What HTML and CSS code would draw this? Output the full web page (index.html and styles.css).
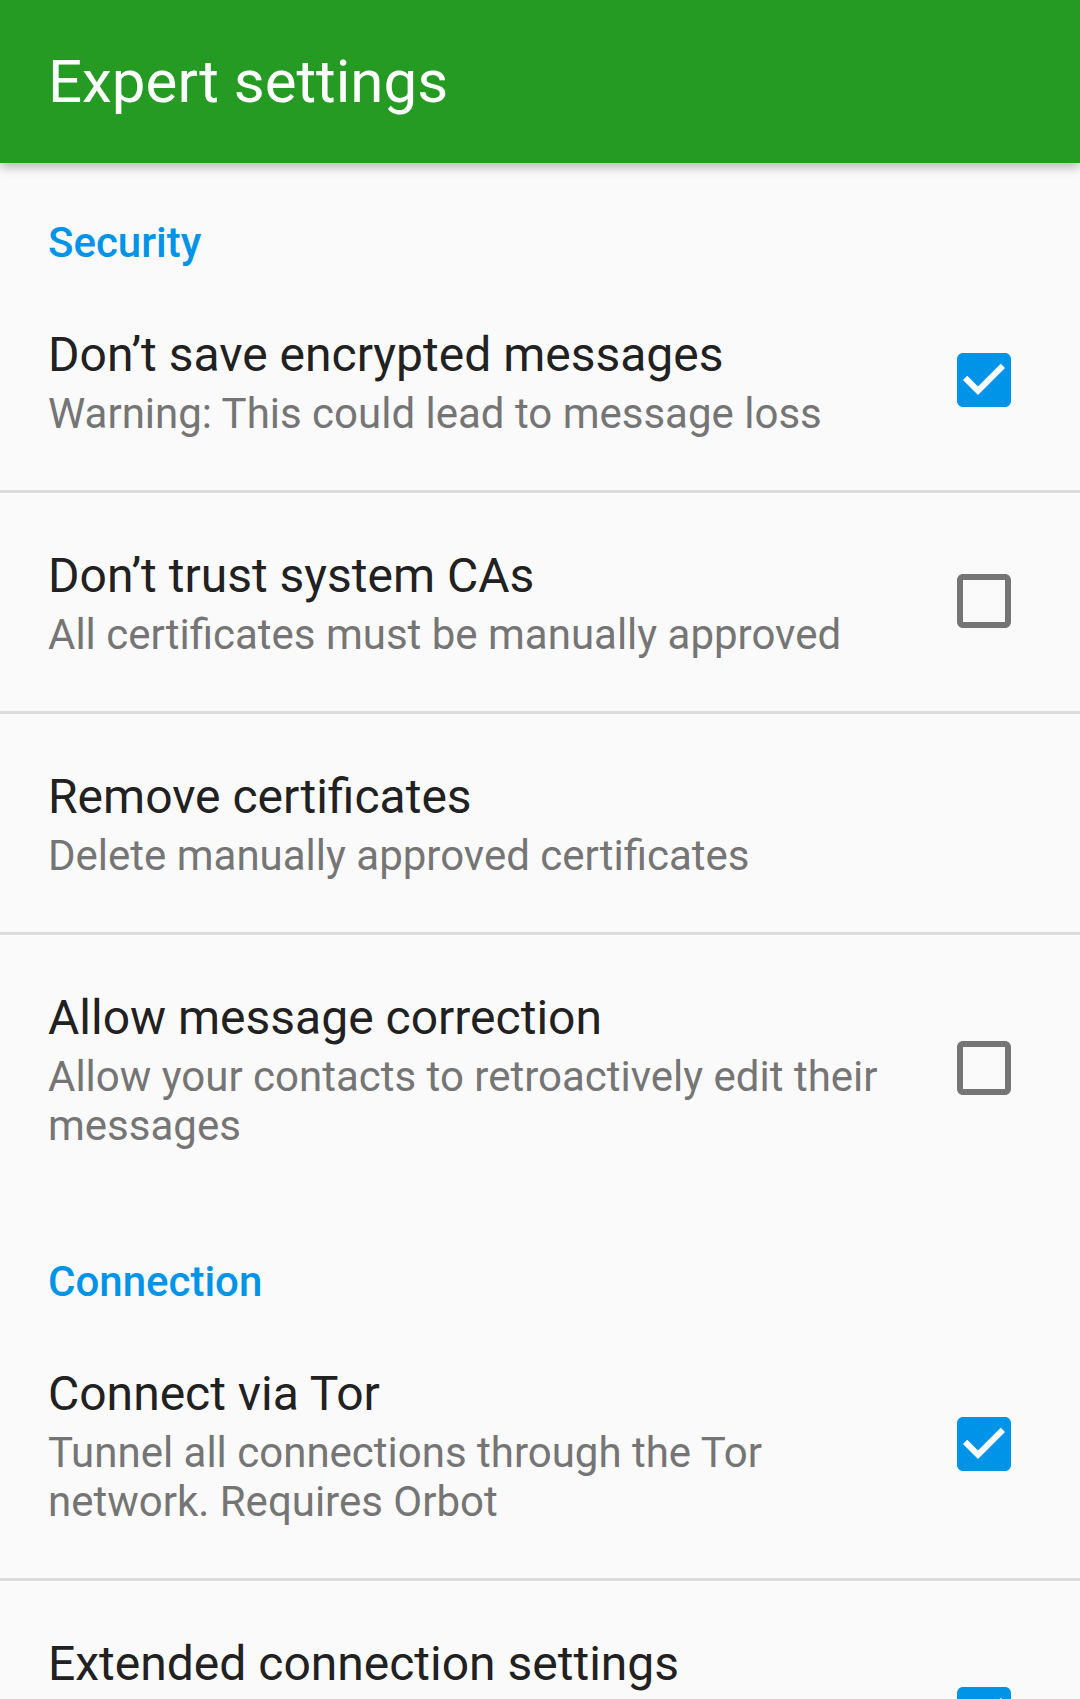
FILE: index.html
```html
<!DOCTYPE html>
<html lang="en">
<head>
<meta charset="utf-8">
<title>Expert settings</title>
<link rel="stylesheet" href="styles.css">
</head>
<body>
<header class="toolbar"><h1 class="toolbar-title">Expert settings</h1></header>
<main class="prefs">
  <div class="category">Security</div>
  <div class="pref">
    <div class="pref-text">
      <div class="pref-title">Don’t save encrypted messages</div>
      <div class="pref-summary">Warning: This could lead to message loss</div>
    </div>
    <div class="pref-widget">
      <svg class="cb" viewBox="3 3 18 18"><path class="cb-on" d="M19,3H5c-1.11,0-2,0.9-2,2v14c0,1.1 0.89,2 2,2h14c1.11,0 2,-0.9 2,-2V5c0,-1.1-0.89,-2-2,-2z"/><path class="cb-check" d="M10,17l-5,-5 1.41,-1.41L10,14.17l7.59,-7.59L19,8l-9,9z"/></svg>
    </div>
  </div>
  <div class="divider"></div>
  <div class="pref">
    <div class="pref-text">
      <div class="pref-title">Don’t trust system CAs</div>
      <div class="pref-summary">All certificates must be manually approved</div>
    </div>
    <div class="pref-widget">
      <svg class="cb" viewBox="3 3 18 18"><path class="cb-off" d="M19,5v14H5V5h14m0,-2H5c-1.11,0-2,0.9-2,2v14c0,1.1 0.89,2 2,2h14c1.1,0 2,-0.9 2,-2V5c0,-1.1-0.9,-2-2,-2z"/></svg>
    </div>
  </div>
  <div class="divider"></div>
  <div class="pref">
    <div class="pref-text">
      <div class="pref-title">Remove certificates</div>
      <div class="pref-summary">Delete manually approved certificates</div>
    </div>
    <div class="pref-widget"></div>
  </div>
  <div class="divider"></div>
  <div class="pref">
    <div class="pref-text">
      <div class="pref-title">Allow message correction</div>
      <div class="pref-summary">Allow your contacts to retroactively edit their messages</div>
    </div>
    <div class="pref-widget">
      <svg class="cb" viewBox="3 3 18 18"><path class="cb-off" d="M19,5v14H5V5h14m0,-2H5c-1.11,0-2,0.9-2,2v14c0,1.1 0.89,2 2,2h14c1.1,0 2,-0.9 2,-2V5c0,-1.1-0.9,-2-2,-2z"/></svg>
    </div>
  </div>
  <div class="category">Connection</div>
  <div class="pref">
    <div class="pref-text">
      <div class="pref-title">Connect via Tor</div>
      <div class="pref-summary">Tunnel all connections through the Tor network. Requires Orbot</div>
    </div>
    <div class="pref-widget">
      <svg class="cb" viewBox="3 3 18 18"><path class="cb-on" d="M19,3H5c-1.11,0-2,0.9-2,2v14c0,1.1 0.89,2 2,2h14c1.11,0 2,-0.9 2,-2V5c0,-1.1-0.89,-2-2,-2z"/><path class="cb-check" d="M10,17l-5,-5 1.41,-1.41L10,14.17l7.59,-7.59L19,8l-9,9z"/></svg>
    </div>
  </div>
  <div class="divider"></div>
  <div class="pref">
    <div class="pref-text">
      <div class="pref-title">Extended connection settings</div>
      <div class="pref-summary">Show hostname and port settings when setting up an account</div>
    </div>
    <div class="pref-widget">
      <svg class="cb" viewBox="3 3 18 18"><path class="cb-on" d="M19,3H5c-1.11,0-2,0.9-2,2v14c0,1.1 0.89,2 2,2h14c1.11,0 2,-0.9 2,-2V5c0,-1.1-0.89,-2-2,-2z"/><path class="cb-check" d="M10,17l-5,-5 1.41,-1.41L10,14.17l7.59,-7.59L19,8l-9,9z"/></svg>
    </div>
  </div>
</main>
</body>
</html>
```
FILE: styles.css
```css
html, body {
  margin: 0;
  padding: 0;
}
body {
  background: #fafafa;
  font-family: Roboto, "Noto Sans", "Liberation Sans", sans-serif;
  width: 1080px;
  height: 1699px;
  overflow: hidden;
}
.toolbar {
  position: relative;
  z-index: 1;
  height: 163px;
  background: #259b24;
  box-shadow: 0 4px 10px rgba(0, 0, 0, 0.28);
  display: flex;
  align-items: center;
  padding-left: 48px;
}
.toolbar-title {
  margin: 0;
  color: #ffffff;
  font-size: 60px;
  font-weight: 400;
  line-height: 70px;
}
.prefs {
  display: flex;
  flex-direction: column;
}
.category {
  padding: 55px 48px 5px 48px;
  color: #0094e8;
  font-size: 42px;
  font-weight: 500;
  line-height: 49px;
}
.pref {
  display: flex;
  align-items: center;
  padding: 55px 0 52px 48px;
}
.pref-text {
  flex: 1;
  min-width: 0;
  display: flex;
  flex-direction: column;
  gap: 6px;
}
.pref-title {
  color: #212121;
  font-size: 48px;
  line-height: 56px;
}
.pref-summary {
  color: #757575;
  font-size: 42px;
  line-height: 49px;
}
.pref-widget {
  width: 180px;
  flex: none;
  display: flex;
  justify-content: flex-start;
  padding-left: 57px;
  margin-bottom: 5px;
  box-sizing: border-box;
}
.cb {
  width: 54px;
  height: 54px;
  display: block;
}
.cb-on { fill: #0094e8; }
.cb-check { fill: #ffffff; }
.cb-off { fill: #757575; }
.divider {
  height: 3px;
  background: #dcdcdc;
}
```
